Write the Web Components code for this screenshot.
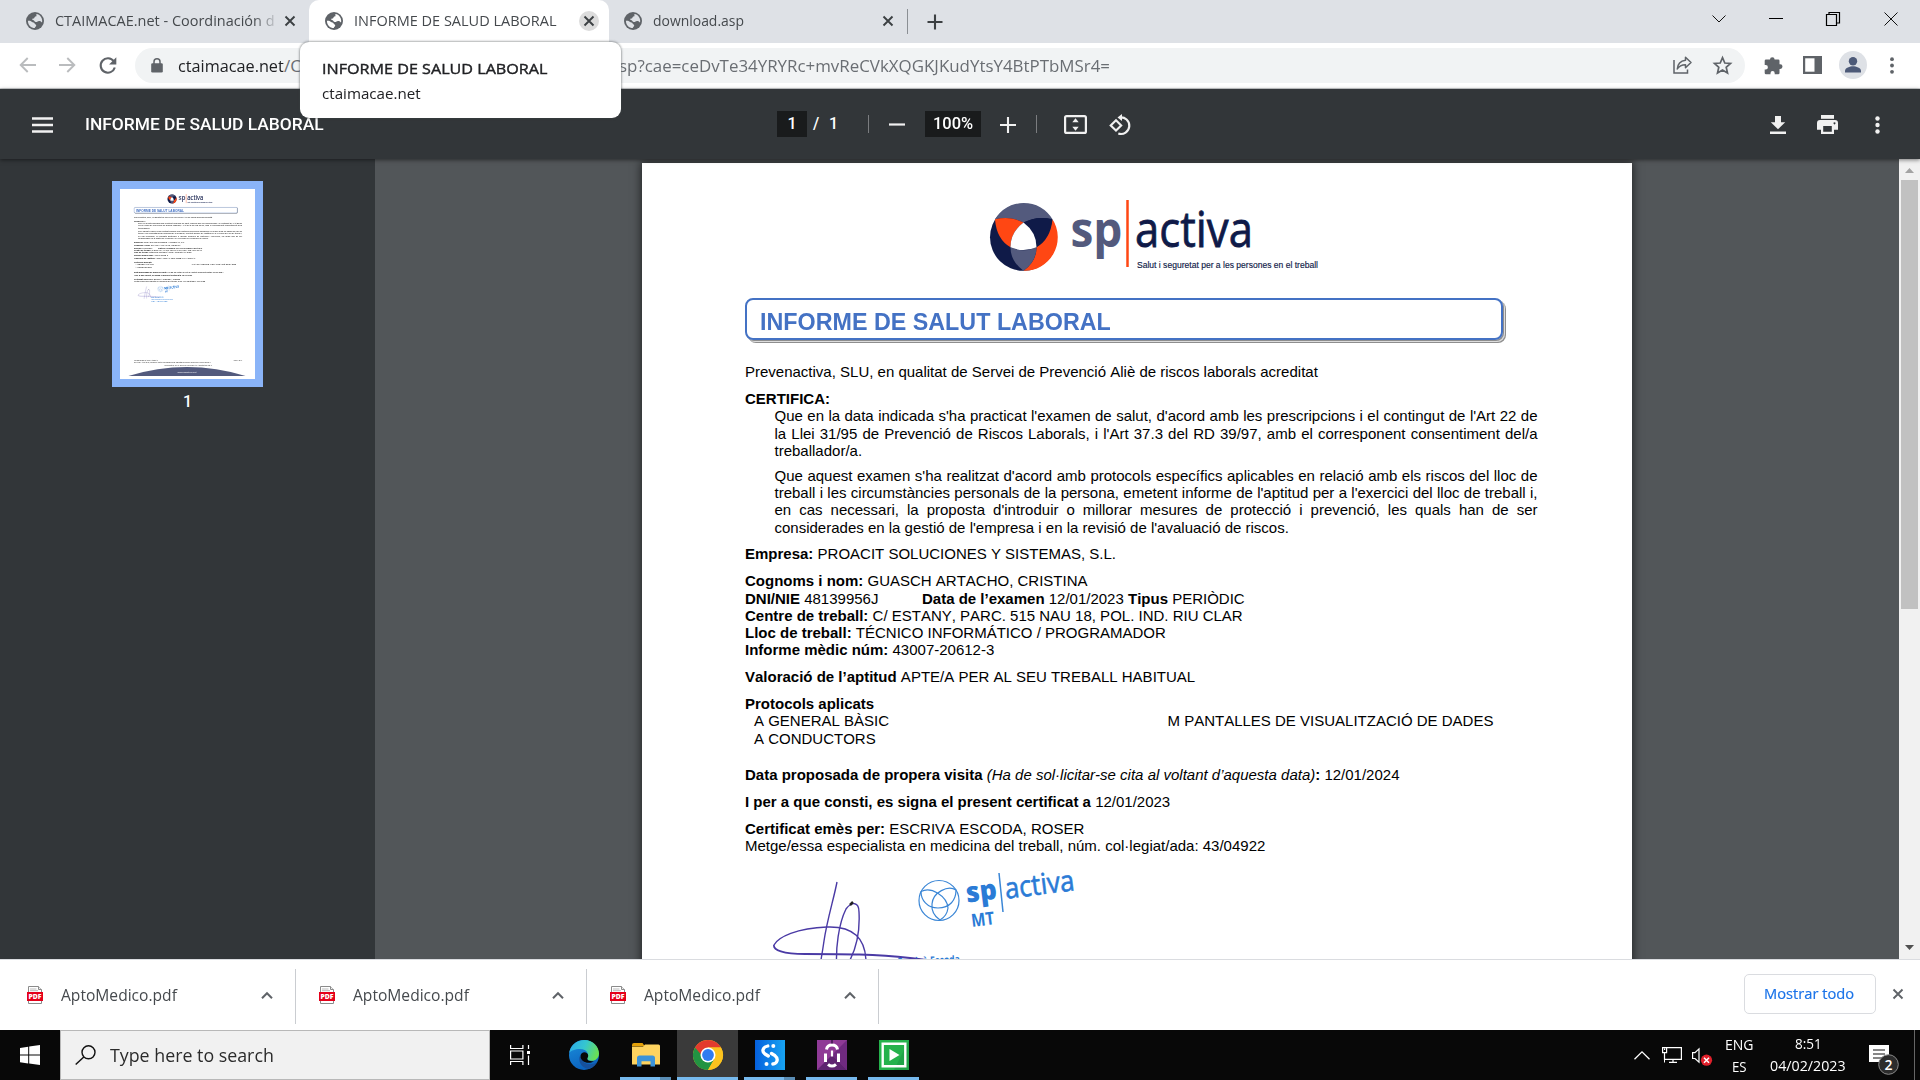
<!DOCTYPE html>
<html lang="ca">
<head>
<meta charset="utf-8">
<title>INFORME DE SALUD LABORAL</title>
<style>
html,body{margin:0;padding:0;width:1920px;height:1080px;overflow:hidden;background:#000}
</style>
</head>
<body>
<desktop-screen></desktop-screen>
<script>
const define = (name, html, setup) => {
  const tpl = document.createElement('template');
  tpl.innerHTML = html;
  customElements.define(name, class extends HTMLElement {
    constructor() { super(); this.attachShadow({mode: 'open'}); }
    connectedCallback() {
      if (this.shadowRoot.childNodes.length) return;
      if (setup) setup(this);
      this.shadowRoot.append(tpl.content.cloneNode(true));
      customElements.upgrade(this.shadowRoot);
    }
  });
};

/* Icons: [width, height, viewBox, markup] */
const GLOBE = '<circle cx="9" cy="9" r="9" fill="#5f6368"/><path fill="var(--hole,#dee1e6)" d="M10.500 2C14 2.500 16.200 5.500 16.200 9C16.200 9.600 16.100 10 16 10.500C15 9.500 14.500 8.800 13 8.900C11.500 9 11.300 10.300 9.800 10C8.500 9.700 8.300 8 6.800 7.900C6.300 7.900 6 7.500 6.300 7C6.800 6.200 8.300 6.700 8.500 5.500C8.600 4.800 9.700 5 10.300 4.300C10.900 3.600 10 2.800 10.500 2zM1.900 8.700C4 8.500 5 9 5.800 9.800C6.600 10.700 8.200 10.200 8.600 11.500C8.900 12.500 10.300 12.300 10.200 13.500C10.100 14.500 9 14.800 8.800 16.100C5 16.100 1.900 13 1.900 8.700z"/>';
const ICONS = {
  globe: [18,18,'0 0 18 18',GLOBE],
  close: [12,12,'0 0 12 12','<path d="M1.500 1.500l9 9M10.500 1.500l-9 9" stroke="currentColor" stroke-width="1.900"/>'],
  plus: [16,16,'0 0 16 16','<path d="M8 .5v15M.5 8h15" stroke="#3c4043" stroke-width="2.100"/>'],
  wdown: [14,8,'0 0 14 8','<path d="M.5.5L7 7 13.500.5" fill="none" stroke="#111" stroke-width="1"/>'],
  wmin: [14,2,'0 0 14 2','<path d="M0 .5h14" stroke="#000"/>'],
  wmax: [14,14,'0 0 14 14','<path d="M.5 2.500h10v11H.5zM3 2.500V.5h10.500v10.500h-3" fill="none" stroke="#000" stroke-width="1.200"/>'],
  wclose: [14,14,'0 0 14 14','<path d="M.5.5l13 13M13.500.5l-13 13" stroke="#111" stroke-width="1"/>'],
  back: [17,16,'0 0 17 16','<path d="M17 8H2M8.700 1L1.700 8l7 7" fill="none" stroke="#babcbe" stroke-width="1.900"/>'],
  fwd: [17,16,'0 0 17 16','<path d="M0 8h15M8.300 1l7 7-7 7" fill="none" stroke="#babcbe" stroke-width="1.900"/>'],
  reload: [18,17,'0 0 18 17','<path d="M14.700 4.200A7.200 7.200 0 1 0 15.800 10.500" fill="none" stroke="#5f6368" stroke-width="2.100"/><path d="M17.300.2v7.200h-7.200z" fill="#5f6368"/>'],
  lock: [12,15,'0 0 12 15','<path fill="#5f6368" d="M1.500 5.200h9q1.300 0 1.300 1.300v6.800q0 1.300-1.300 1.300h-9q-1.300 0-1.300-1.300V6.500q0-1.300 1.300-1.300z"/><path d="M3 6V3.700a3 3 0 0 1 6 0V6" fill="none" stroke="#5f6368" stroke-width="1.500"/>'],
  share: [19,18,'0 0 19 18','<path d="M1 4v13h13.500v-3.500" fill="none" stroke="#5f6368" stroke-width="1.500"/><path d="M12.500 1.200l5.500 5.300-5.500 5.300V8.700C8.500 8.700 6 10 4.300 13c.3-4.500 3-8 8.200-8.700z" fill="none" stroke="#5f6368" stroke-width="1.500" stroke-linejoin="round"/>'],
  star: [19,18,'0 0 19 18','<path d="M9.500 1.700l2.300 5.300 5.700.5-4.300 3.800 1.300 5.600-5-3-5 3 1.300-5.600L1.500 7.500 7.200 7z" fill="none" stroke="#5f6368" stroke-width="1.700"/>'],
  puzzle: [19,19,'0 0 19 19','<path fill="#5f6368" d="M6 3.500a2.300 2.300 0 0 1 4.600 0h3.700q1.200 0 1.200 1.200v3.600h.7a2.300 2.300 0 0 1 0 4.600h-.7v4q0 1.300-1.300 1.300h-3.500v-1a2.100 2.100 0 0 0-4.200 0v1H2q-1.300 0-1.300-1.300v-3.500h1a2.200 2.200 0 0 0 0-4.400h-1V4.800q0-1.300 1.300-1.300z"/>'],
  panel: [19,18,'0 0 19 18','<path fill="#5f6368" d="M0 0h19v18H0z"/><path fill="#fff" d="M2.200 2.300h9.300v13.400H2.200z"/>'],
  avatar: [28,28,'0 0 28 28','<circle cx="14" cy="14" r="14" fill="#dee1e6"/><circle cx="14" cy="10.200" r="4.200" fill="#4d5a78"/><path fill="#4d5a78" d="M6 21.500v-1.700c0-3 5-4.600 8-4.600s8 1.600 8 4.600v1.700z"/>'],
  kebab: [4,17,'0 0 4 17','<g fill="#5f6368"><circle cx="2" cy="2.200" r="1.900"/><circle cx="2" cy="8.500" r="1.900"/><circle cx="2" cy="14.800" r="1.900"/></g>'],
  menu: [21,16,'0 0 21 16','<path d="M0 1.500h21M0 8h21M0 14.500h21" stroke="#f1f1f1" stroke-width="2.500"/>'],
  minus: [16,3,'0 0 16 3','<path d="M0 1.500h16" stroke="#f1f1f1" stroke-width="2.200"/>'],
  pplus: [16,16,'0 0 16 16','<path d="M0 8h16M8 0v16" stroke="#f1f1f1" stroke-width="2.100"/>'],
  fit: [23,19,'0 0 23 19','<rect x="1.100" y="1.100" width="20.800" height="16.800" rx="1.500" fill="none" stroke="#f1f1f1" stroke-width="2.200"/><path d="M11.500 3.200l3.200 4H8.300zM11.500 15.800l3.200-4H8.300z" fill="#f1f1f1"/>'],
  rotate: [23,22,'0 0 23 22','<path d="M7 6.200l5.200 5.200L7 16.600l-5.300-5.200z" fill="none" stroke="#f1f1f1" stroke-width="2.100"/><path d="M10.500 3.500A8.300 8.300 0 1 1 9.300 19.500" fill="none" stroke="#f1f1f1" stroke-width="2.200"/><path d="M13 0v7L8.500 3.500z" fill="#f1f1f1"/>'],
  download: [16,18,'0 0 16 18','<path d="M5 0h6v6.200h4.200L8 13.300.8 6.200H5zM0 15.600h16v2.300H0z" fill="#f1f1f1"/>'],
  print: [21,19,'0 0 21 19','<path d="M4 0h13v3.800H4z" fill="#f1f1f1"/><path fill-rule="evenodd" d="M3 5h15q3 0 3 3v6.700h-4V19H4v-4.300H0V8q0-3 3-3zM6.200 11v5.800h8.600V11zM17.500 7.300a1 1 0 1 0 .01 0z" fill="#f1f1f1"/>'],
  pkebab: [5,18,'0 0 5 18','<g fill="#f1f1f1"><circle cx="2.500" cy="2.500" r="2.200"/><circle cx="2.500" cy="9" r="2.200"/><circle cx="2.500" cy="15.500" r="2.200"/></g>'],
  pdf: [16,18,'0 0 16 18','<path d="M1.500.5h10L14.500 3.500v14h-13z" fill="#fff" stroke="#8b8b8b"/><path d="M11.500.5v3h3" fill="#eee" stroke="#8b8b8b"/><path d="M3 3h6.500M3 4.700h8" stroke="#aaa" stroke-width=".8"/><path d="M0 6h16v9H0z" fill="#e5001a"/><text x="8" y="13" text-anchor="middle" font-family="Open Sans" font-weight="800" font-size="6.800" fill="#fff" textLength="13" lengthAdjust="spacingAndGlyphs">PDF</text>'],
  up: [12,7,'0 0 12 7','<path d="M1 6.200L6 1.200l5 5" fill="none" stroke="#5f6368" stroke-width="2"/>'],
  win: [20,20,'0 0 20 20','<path fill="#fff" d="M0 2.900L8.200 1.700v7.900H0zM9.200 1.500L20 0v9.600H9.200zM0 10.600h8.200v7.800L0 17.200zM9.200 10.600H20V20L9.200 18.500z"/>'],
  search: [21,20,'0 0 21 20','<circle cx="13.500" cy="7.300" r="6.500" fill="none" stroke="#111" stroke-width="1.400"/><path d="M8.800 12L.7 19.500" stroke="#111" stroke-width="1.500"/>'],
  taskview: [20,20,'0 0 20 20','<path d="M.6 0v3.500h12.300V0M.6 20v-3.500h12.300V20M.6 6h12.300v8H.6zM18.500 0v4M18.500 10.500V20" fill="none" stroke="#fff" stroke-width="1.200"/><path d="M17 6h3v3h-3z" fill="#fff"/>'],
  edge: [30,30,'0 0 30 30','<defs><linearGradient id="a" x1="0" y1=".2" x2="1" y2=".5"><stop stop-color="#2aa9e8"/><stop offset=".5" stop-color="#35c6d0"/><stop offset="1" stop-color="#6be052"/></linearGradient><linearGradient id="b" x1="0" y1="0" x2=".4" y2="1"><stop stop-color="#1b8fdc"/><stop offset="1" stop-color="#0b62bd"/></linearGradient></defs><circle cx="15" cy="15" r="15" fill="url(#b)"/><path d="M.2 13C1.500 5 8 0 15.500 0 24 0 30 6.500 30 13.500c0 4.500-3.500 7.300-7.200 7.300-3.300 0-5.100-1.200-4.600-2.300 2.200-3.500.5-9.500-7.200-9.500C6 9 1.500 11 .2 13z" fill="url(#a)"/><path d="M10.500 16.500c-1.500 7 4 12.500 10 12.300 3.500-1.400 6-4 7.300-6.300-7 3.700-15 1-16-5.500z" fill="#16509c"/><path d="M15 12.300c2.500 0 4.200 1.500 4.200 3.300 0 2-1 2-.9 3.300.2 2 4 2.700 7 2C19.500 25 11.500 22 11.500 16c0-1.700 1.500-3.500 3.500-3.700z" fill="#080808"/>'],
  folder: [28,24,'0 0 28 24','<path d="M0 2q0-2 2-2h8.500l2.500 3.500H0z" fill="#e3a008"/><path d="M0 3.800h11l2-2.300h13.500Q28 1.500 28 3v18.500H0z" fill="#fed35f"/><path d="M5 23.500V15q0-2.500 2.500-2.500h13Q23 12.500 23 15v8.500h-4.500v-5.200h-9v5.200z" fill="#3c93d8"/>'],
  chrome: [30,30,'0 0 30 30','<circle cx="15" cy="15" r="15" fill="#fcc31e"/><path d="M2 7.500A15 15 0 0 1 28 7.500H15L8.500 18.700z" fill="#e33b2e"/><path d="M2 7.500A15 15 0 0 0 15 30L21.500 18.700 15 15H8.500z" fill="#229342"/><path d="M28 7.500H15V15l6.500 3.700L15 30A15 15 0 0 0 28 7.500z" fill="#fcc31e"/><circle cx="15" cy="15" r="7.500" fill="#fff"/><circle cx="15" cy="15" r="5.900" fill="#2f7bf0"/>'],
  sapp: [30,30,'0 0 30 30','<defs><linearGradient id="s"><stop stop-color="#0560de"/><stop offset="1" stop-color="#18a4f2"/></linearGradient></defs><path d="M0 0h30v30H0z" fill="url(#s)"/><path d="M12.800 6C7.500 7 6.500 11.500 10 14l3.300 2M16.500 13.500l3.500 2.200c3.800 3 2.300 8-2.200 8.300" fill="none" stroke="#fff" stroke-width="3.300" stroke-linecap="round"/><g fill="#fff"><circle cx="18.300" cy="6" r="2"/><circle cx="11.500" cy="24" r="2"/></g>'],
  lapp: [30,30,'0 0 30 30','<path d="M0 0h30v30H0z" fill="#8f3a96"/><path d="M15 15L30 0v30z" fill="#702a80"/><path d="M15 15L30 30H0z" fill="#5e2370"/><path d="M9.500 9.500C10 6 12.500 5 15 5s5 1 5.500 4.500M8.500 13.500v8.500M21.500 13.500v8.500M11 24.300c2.500 2.200 5.500 2.200 8 0" fill="none" stroke="#fff" stroke-width="3"/><path d="M15 10.500v6" stroke="#fff" stroke-width="2.200"/><path d="M15 0v3.500" stroke="#3b164a" stroke-width="1.500"/>'],
  papp: [30,30,'0 0 30 30','<path d="M0 0h30v30H0z" fill="#25b24c"/><path d="M30 0v30H15z" fill="#1fa347"/><path d="M3.700 3.700h22.600v22.600H3.700z" fill="none" stroke="#fff" stroke-width="2.400"/><path d="M10.500 9l10 6-10 6z" fill="#fff"/>'],
  tup: [16,9,'0 0 16 9','<path d="M.5 8.300L8 .9l7.500 7.400" fill="none" stroke="#fff" stroke-width="1.300"/>'],
  net: [20,16,'0 0 20 16','<path d="M5 .6h14.400v11.800H2.500V6M11 12.400V15M7 15.400h8" fill="none" stroke="#fff" stroke-width="1.200"/><path d="M.6.6h4v5h-4zM2.600 1.500V3" fill="none" stroke="#fff" stroke-width="1.200"/><path d="M2.500 6v9.500" stroke="#fff" stroke-width="1"/>'],
  vol: [22,18,'0 0 22 18','<path d="M.6 4.600h2.400L7 .8v13.400L3 10.500H.6z" fill="none" stroke="#fff" stroke-width="1.200"/><circle cx="14.500" cy="12.200" r="5.600" fill="#e0202b"/><path d="M12 9.700l5 5M17 9.700l-5 5" stroke="#fff" stroke-width="1.500"/>'],
  note: [32,32,'0 0 32 32','<path d="M0 0h20v17h-6l-4 4v-4H0z" fill="#fff"/><path d="M4 5h12M4 9h12M4 13h9" stroke="#111" stroke-width="1.200"/><circle cx="19.500" cy="19.500" r="9.800" fill="#2c2c2c" stroke="#8a8a8a" stroke-width="1"/><text x="19.500" y="24.500" text-anchor="middle" font-family="Open Sans" font-weight="600" font-size="14" fill="#fff">2</text>'],
  sup: [9,5,'0 0 9 5','<path d="M4.500 0L9 5H0z" fill="#a3a3a3"/>'],
  sdown: [9,5,'0 0 9 5','<path d="M4.500 5L9 0H0z" fill="#505050"/>']
};
customElements.define('ui-icon', class extends HTMLElement {
  constructor() { super(); this.attachShadow({mode: 'open'}); }
  connectedCallback() {
    const [w, h, vb, body] = ICONS[this.getAttribute('name')];
    this.shadowRoot.innerHTML = `<style>:host{display:block;flex:none;width:${w}px;height:${h}px}svg{display:block;overflow:visible}</style><svg width="${w}" height="${h}" viewBox="${vb}">${body}</svg>`;
  }
});

/* Single line of text, condensed or widened to the width given in w */
customElements.define('fit-text', class extends HTMLElement {
  constructor() {
    super();
    this.attachShadow({mode: 'open'}).innerHTML = '<style>:host{display:block;flex:none;white-space:pre}span{display:inline-block;transform-origin:0 50%;white-space:pre}</style><span><slot></slot></span>';
  }
  connectedCallback() {
    const w = +this.getAttribute('w'), span = this.shadowRoot.querySelector('span');
    if (!w) return;
    this.style.width = w + 'px';
    span.style.transform = `scaleX(${w / span.offsetWidth})`;
  }
});

define('browser-tab', `<style>
:host{display:flex;align-items:center;flex:none;height:43px;font:15px/38px "Open Sans",sans-serif;color:#45494d;box-sizing:border-box}
:host([active]){background:#fff;border-radius:10px 10px 0 0;--hole:#fff;color:#45494d}
.t{margin-left:11px;flex:1;min-width:0;overflow:hidden;height:42px}
:host([fade]) .t{-webkit-mask-image:linear-gradient(90deg,#000 88%,transparent)}
.c{width:20px;height:20px;border-radius:50%;display:flex;align-items:center;justify-content:center;color:#3c4043}
:host([active]) .c{background:#dcdcdc}
ui-icon,.c{margin-top:-1px}.c ui-icon{margin:0}
</style><ui-icon name="globe"></ui-icon><div class="t"><slot></slot></div><div class="c"><ui-icon name="close"></ui-icon></div>`);

define('tab-strip', `<style>
:host{display:flex;height:43px;background:#dee1e6;align-items:center}
.line{width:1px;height:25px;background:#8b8f94}
.win{display:flex;align-items:center;margin-left:auto;padding:0 22px 6px 0}
</style>
<browser-tab fade style="width:300px;margin-left:26px;margin-right:-17px;padding-right:26px"><fit-text w="220">CTAIMACAE.net - Coordinación d</fit-text></browser-tab>
<browser-tab active style="width:300px;padding:0 10px 0 16px"><fit-text w="203">INFORME DE SALUD LABORAL</fit-text></browser-tab>
<browser-tab style="width:283px;margin-left:15px;padding-right:9px"><fit-text w="91">download.asp</fit-text></browser-tab>
<div class="line"></div><ui-icon name="plus" style="margin-left:19px"></ui-icon>
<div class="win"><ui-icon name="wdown"></ui-icon><ui-icon name="wmin" style="margin-left:43px"></ui-icon><ui-icon name="wmax" style="margin-left:43px"></ui-icon><ui-icon name="wclose" style="margin-left:44px"></ui-icon></div>`);

define('address-bar', `<style>
:host{display:flex;height:45px;background:#fff;border-bottom:1px solid #cfd1d3;align-items:center;font:17px/34px "Open Sans",sans-serif}
.box{display:flex;align-items:center;width:1610px;height:35px;border-radius:18px;background:#f1f3f4;margin-left:18px;box-sizing:border-box;padding-left:16px;color:#6a6e73}
ui-icon{margin-top:-1px}
</style>
<ui-icon name="back" style="margin-left:19px"></ui-icon><ui-icon name="fwd" style="margin-left:23px"></ui-icon><ui-icon name="reload" style="margin-left:23px"></ui-icon>
<div class="box"><ui-icon name="lock"></ui-icon>
<fit-text w="106" style="margin-left:15px;color:#202124">ctaimacae.net</fit-text><fit-text w="17">/C</fit-text>
<fit-text w="491" style="margin-left:318px">sp?cae=ceDvTe34YRYRc+mvReCVkXQGKJKudYtsY4BtPTbMSr4=</fit-text>
<ui-icon name="share" style="margin-left:563px"></ui-icon><ui-icon name="star" style="margin-left:21px"></ui-icon></div>
<ui-icon name="puzzle" style="margin-left:19px"></ui-icon><ui-icon name="panel" style="margin-left:20px"></ui-icon><ui-icon name="avatar" style="margin-left:17px"></ui-icon><ui-icon name="kebab" style="margin-left:23px"></ui-icon>`);

define('tab-tooltip', `<style>
:host{display:block;box-sizing:border-box;width:321px;height:76px;background:#fff;border-radius:9px;box-shadow:0 0 2px 1px rgba(60,64,67,.4);padding:14px 0 0 22px;font:15px/25px "Open Sans",sans-serif;color:#202124}
b{font-weight:500;-webkit-text-stroke:.4px #202124}
</style><fit-text w="226"><b>INFORME DE SALUD LABORAL</b></fit-text><fit-text w="99">ctaimacae.net</fit-text>`);

define('pdf-toolbar', `<style>
:host{display:flex;align-items:center;height:70px;background:#323639;color:#fff;font:500 16px/26px Roboto,sans-serif;box-shadow:0 1px 4px rgba(0,0,0,.5);position:relative}
.f{background:#191b1c;height:26px;line-height:25px;display:flex;justify-content:center;margin-top:-1px}
.l{width:1px;height:18px;background:#7b7d80}
.s{line-height:25px;margin-top:-1px}
ui-icon{margin-top:1px}
</style>
<ui-icon name="menu" style="margin-left:32px"></ui-icon><fit-text w="239" style="margin-left:32px;margin-top:1px">INFORME DE SALUD LABORAL</fit-text>
<div class="f" style="width:30px;margin-left:453px">1</div><div class="s" style="width:7px;margin-left:6px">/</div><div class="s" style="width:9px;margin-left:9px">1</div>
<div class="l" style="margin-left:30px"></div><ui-icon name="minus" style="margin-left:20px"></ui-icon>
<div class="f" style="width:56px;margin-left:20px"><fit-text w="40">100%</fit-text></div><ui-icon name="pplus" style="margin-left:19px"></ui-icon>
<div class="l" style="margin-left:20px"></div><ui-icon name="fit" style="margin-left:27px"></ui-icon><ui-icon name="rotate" style="margin-left:22px"></ui-icon>
<ui-icon name="download" style="margin-left:638px"></ui-icon><ui-icon name="print" style="margin-left:31px"></ui-icon><ui-icon name="pkebab" style="margin-left:37px"></ui-icon>`);

define('doc-logo', `<style>:host{display:block;width:330px;height:72px}svg{display:block;overflow:visible}</style>
<svg width="330" height="72" viewBox="0 0 330 72">
<g transform="translate(33.500 37.300)"><circle r="33.500" fill="#0f1a48"/>
<path d="M29-18A33.500 33.500 0 0 1 0 33.500Q13 24 13 10Q26 0 29-18z" fill="#ff4713"/>
<path d="M-28.500-18A33.500 33.500 0 0 1 29-18Q13-22 0-14.700Q-13-22-28.500-18z" fill="#535a7d"/>
<path d="M-28.500-18Q-13-22 0-14.700Q-13-5-13 10Q-27 2-28.500-18z" fill="#ff4713"/>
<path d="M29-18Q13-22 0-14.700Q13-5 13 10Q27 2 29-18z" fill="#0f1a48"/>
<path d="M-13 10Q0 16 13 10Q13 24 0 33.500Q-13 24-13 10z" fill="#535a7d"/>
<path d="M0-14.700Q13-5 13 10Q0 15.500-13 10Q-13-5 0-14.700z" fill="#fff"/></g>
<g font-family="Open Sans,sans-serif"><text x="80.500" y="46.500" font-size="50" font-weight="700" fill="#535a7d" textLength="52" lengthAdjust="spacingAndGlyphs">sp</text>
<text x="145" y="46.500" font-size="50" fill="#0f1a48" stroke="#0f1a48" stroke-width=".8" textLength="118" lengthAdjust="spacingAndGlyphs">activa</text></g>
<path d="M137.500 0v67" stroke="#ff4713" stroke-width="2.500"/>
<text x="147" y="68" font-family="Liberation Sans,sans-serif" font-size="9" fill="#0f1a48" stroke="#0f1a48" stroke-width=".15" textLength="181" lengthAdjust="spacingAndGlyphs">Salut i seguretat per a les persones en el treball</text>
</svg>`);

/* Text row of the certificate; gap is the space above it */
define('doc-line', `<style>:host{display:block;white-space:pre;height:17px;line-height:17px}:host([in]){padding-left:29.500px}:host([just]){white-space:normal;text-align:justify;text-align-last:justify}</style><slot></slot>`,
  el => { el.style.marginTop = (el.getAttribute('gap') || 0) + 'px'; });

define('doc-signature', `<style>:host{display:block;height:160px}svg{display:block;overflow:visible}</style>
<svg width="420" height="160" viewBox="0 0 420 160">
<g fill="none" stroke="#4a3aa5" stroke-width="1.400"><path d="M92 14C89 30 82 52 79 73S75 95 74 105"/><path d="M92 103C90 80 94 55 101 41C107 33 114 34 114 44C115 62 112 78 105 92"/><path d="M105 37l3-3" stroke="#222" stroke-width="2.500"/><path d="M29 77C33 69 52 60 82 59C108 58 121 70 121 95"/><path d="M29 77C28 82 38 86 60 86C100 86 130 86 165 90S180 93 190 95" stroke-width="1.800"/></g>
<g fill="none" stroke="#3a86d6" stroke-width="1.200"><circle cx="194" cy="32.500" r="20"/><path d="M176 23.500C186 18 202 28 203 40Q202 48 195 52Q186 46 187 36C188 24 203 17 211 22C211 32 205 40 193 40C182 40 176 32 176 23.500Z"/></g>
<g fill="#2a7bd6" transform="rotate(-7 222 34)" font-family="Open Sans,sans-serif"><text x="222" y="34.500" font-size="28" font-weight="800" textLength="31" lengthAdjust="spacingAndGlyphs">sp</text><text x="261" y="35.500" font-size="29" stroke="#2a7bd6" stroke-width=".6" textLength="70" lengthAdjust="spacingAndGlyphs">activa</text><text x="224" y="59.500" font-size="18" font-weight="700" textLength="23" lengthAdjust="spacingAndGlyphs">MT</text></g>
<path d="M254 5l4 39" stroke="#3a86d6" stroke-width="1.500"/>
<g fill="#2a7bd6" font-family="Open Sans,sans-serif" font-weight="700" font-size="10"><text x="126" y="94.500" transform="rotate(-2.500 216 94)" textLength="89" lengthAdjust="spacingAndGlyphs">Roser Escrivà Escoda</text><text x="126" y="112" textLength="160" lengthAdjust="spacingAndGlyphs" font-weight="400">Metge especialista en medicina del treball</text><text x="126" y="126" textLength="120" lengthAdjust="spacingAndGlyphs" font-weight="400">Col. 43/04922</text></g>
</svg>`);

define('doc-page', `<style>
:host{display:block;box-sizing:border-box;width:990px;height:1401px;background:#fff;color:#000;font:15px/17px "Liberation Sans",sans-serif;font-kerning:none;padding:37px 94.500px 0 103px;overflow:hidden}
.title{display:block;box-sizing:border-box;width:758px;height:42px;border:2.500px solid #4472c4;border-radius:8px;box-shadow:1px 1px 0 #8e8e8e,2px 2px 0 #ddd,3px 3px 0 #8e8e8e;margin:26px 0 23px;padding:2px 0 0 13px;font:bold 23.500px/41px "Liberation Sans",sans-serif;color:#4472c4}
.cols{display:flex;padding-left:9px}.cols>div:first-child{width:413.500px}
.dni{display:inline-block;width:177px}
</style>
<doc-logo style="margin-left:245px"></doc-logo>
<div class="title"><fit-text w="351">INFORME DE SALUT LABORAL</fit-text></div>
<doc-line gap="0">Prevenactiva, SLU, en qualitat de Servei de Prevenció Aliè de riscos laborals acreditat</doc-line>
<doc-line gap="10"><b>CERTIFICA:</b></doc-line>
<doc-line in just>Que en la data indicada s'ha practicat l'examen de salut, d'acord amb les prescripcions i el contingut de l'Art 22 de</doc-line>
<doc-line in just gap="1">la Llei 31/95 de Prevenció de Riscos Laborals, i l'Art 37.3 del RD 39/97, amb el corresponent consentiment del/a</doc-line>
<doc-line in>treballador/a.</doc-line>
<doc-line in just gap="8">Que aquest examen s'ha realitzat d'acord amb protocols específics aplicables en relació amb els riscos del lloc de</doc-line>
<doc-line in just>treball i les circumstàncies personals de la persona, emetent informe de l'aptitud per a l'exercici del lloc de treball i,</doc-line>
<doc-line in just>en cas necessari, la proposta d'introduir o millorar mesures de protecció i prevenció, les quals han de ser</doc-line>
<doc-line in gap="1">considerades en la gestió de l'empresa i en la revisió de l'avaluació de riscos.</doc-line>
<doc-line gap="9"><b>Empresa:</b> PROACIT SOLUCIONES Y SISTEMAS, S.L.</doc-line>
<doc-line gap="10"><b>Cognoms i nom:</b> GUASCH ARTACHO, CRISTINA</doc-line>
<doc-line gap="1"><span class="dni"><b>DNI/NIE</b> 48139956J</span><b>Data de l’examen</b> 12/01/2023 <b>Tipus</b> PERIÒDIC</doc-line>
<doc-line><b>Centre de treball:</b> C/ ESTANY, PARC. 515 NAU 18, POL. IND. RIU CLAR</doc-line>
<doc-line><b>Lloc de treball:</b> TÉCNICO INFORMÁTICO / PROGRAMADOR</doc-line>
<doc-line><b>Informe mèdic núm:</b> 43007-20612-3</doc-line>
<doc-line gap="10"><b>Valoració de l’aptitud</b> APTE/A PER AL SEU TREBALL HABITUAL</doc-line>
<doc-line gap="10"><b>Protocols aplicats</b></doc-line>
<div class="cols"><div><doc-line>A GENERAL BÀSIC</doc-line><doc-line gap="1">A CONDUCTORS</doc-line></div><doc-line>M PANTALLES DE VISUALITZACIÓ DE DADES</doc-line></div>
<doc-line gap="19"><b>Data proposada de propera visita</b> <i>(Ha de sol·licitar-se cita al voltant d’aquesta data)</i><b>:</b> 12/01/2024</doc-line>
<doc-line gap="10"><b>I per a que consti, es signa el present certificat a</b> 12/01/2023</doc-line>
<doc-line gap="10"><b>Certificat emès per:</b> ESCRIVA ESCODA, ROSER</doc-line>
<doc-line>Metge/essa especialista en medicina del treball, núm. col·legiat/ada: 43/04922</doc-line>
<doc-signature style="margin-top:14px"></doc-signature>
<slot></slot>`);

define('doc-footer', `<style>
:host{display:block;margin-top:389px;font:12px/15px "Liberation Sans",sans-serif;color:#222}
.r{display:flex;justify-content:space-between}.c{text-align:center;margin-top:10px}svg{display:block;margin:4px 0 0 -42px}
</style><div class="r"><div>INFORME DE SALUT LABORAL<br>GUASCH ARTACHO, CRISTINA Data: 12/01/2023 Tipus: PERIÒDIC Informe mèdic núm: 43007-20612-3</div><div>Pàg. 1 de 1</div></div>
<div class="c">Prevenactiva, S.L.U. Servei de Prevenció Aliè Acreditat SP-012-T</div>
<svg width="860" height="66" viewBox="0 0 860 66"><path d="M0 66Q430-66 860 66z" fill="#535a7d"/><text x="430" y="42" text-anchor="middle" font-size="18" fill="#fff">www.spactiva.cat</text></svg>`);

define('page-thumbnail', `<style>
:host{display:flex;flex-direction:column;align-items:center;width:151px;color:#fff;font:500 16px/20px Roboto,sans-serif}
.f{width:151px;height:206px;box-sizing:border-box;border:8px solid #8ab4f8;background:#fff;overflow:hidden}
doc-page{transform:scale(.1364,.1356);transform-origin:0 0}
.n{margin-top:5px}
</style><div class="f"><doc-page><doc-footer></doc-footer></doc-page></div><div class="n">1</div>`);

define('pdf-viewer', `<style>
:host{display:flex;height:800px;background:#525659;overflow:hidden}
.side{width:375px;background:#323639;box-sizing:border-box;padding:22px 0 0 112px;flex:none}
.doc{flex:1;padding:4px 0 0 267px}
.doc doc-page{box-shadow:0 0 9px 1px rgba(0,0,0,.6)}
.bar{width:21px;background:#f1f1f1;display:flex;flex-direction:column;align-items:center;box-sizing:border-box;padding:9px 0 9px;flex:none}
.thumb{width:17px;height:429px;background:#c1c1c1;margin:7px 0 auto}
</style><div class="side"><page-thumbnail></page-thumbnail></div><div class="doc"><doc-page></doc-page></div>
<div class="bar"><ui-icon name="sup"></ui-icon><div class="thumb"></div><ui-icon name="sdown"></ui-icon></div>`);

define('download-item', `<style>
:host{display:flex;align-items:center;box-sizing:border-box;width:291.500px;height:55px;border-right:1px solid #cacdd1;font:16px/53px "Open Sans",sans-serif;color:#45494d;padding:0 22px 2px 23px}
:host ui-icon:last-child{margin-left:auto}
</style><ui-icon name="pdf" style="margin-top:-1px"></ui-icon><fit-text w="116" style="margin-left:18px">AptoMedico.pdf</fit-text><ui-icon name="up"></ui-icon>`);

define('download-shelf', `<style>
:host{display:flex;align-items:center;box-sizing:border-box;height:71px;background:#fff;border-top:1px solid #dadce0;padding:2px 16px 0 4px}
.b{width:132px;height:40px;box-sizing:border-box;border:1px solid #dadce0;border-radius:5px;margin:-4px 16px 0 auto;display:flex;justify-content:center;font:500 15px/36px "Open Sans",sans-serif;color:#1a73e8}
.b fit-text{margin-left:-2px;-webkit-text-stroke:.2px #1a73e8}
.x{color:#5f6368;margin-top:-4px}
</style><download-item></download-item><download-item></download-item><download-item></download-item>
<div class="b"><fit-text w="90">Mostrar todo</fit-text></div><ui-icon class="x" name="close"></ui-icon>`);

define('task-button', `<style>
:host{display:flex;flex-direction:column;align-items:center;justify-content:space-between;box-sizing:border-box;height:50px;width:51px;flex:none}
:host([active]){background:#3a3a3a;width:61px}
.i{height:47px;display:flex;align-items:center;padding-top:3px;box-sizing:border-box}
.u{display:flex;width:100%;height:3px}
:host([run]) .u{background:#76b9ed}
:host([multi]) .u::after{content:"";margin-left:auto;width:11px;background:#5a8db5}
</style><div class="i"><slot></slot></div><div class="u"></div>`);

define('task-bar', `<style>
:host{display:flex;align-items:center;height:50px;background:#080808;font:15px/22px "Open Sans",sans-serif;color:#fff}
.start{width:60px;display:flex;justify-content:center}
.q{width:430px;height:50px;box-sizing:border-box;border:1px solid #b8b8b8;background:#f1f1f1;display:flex;align-items:center;padding-left:14px;color:#2b2b2b;font:19px/48px "Open Sans",sans-serif}
.col{display:flex;flex-direction:column;align-items:center;flex:none}
.end{width:1px;height:50px;background:#666;margin-left:13px}
</style>
<div class="start"><ui-icon name="win"></ui-icon></div>
<div class="q"><ui-icon name="search"></ui-icon><fit-text w="164" style="margin-left:14px">Type here to search</fit-text></div>
<ui-icon name="taskview" style="margin-left:20px"></ui-icon>
<task-button style="margin-left:28px"><ui-icon name="edge"></ui-icon></task-button>
<task-button run multi style="margin-left:11px"><ui-icon name="folder"></ui-icon></task-button>
<task-button run active style="margin-left:6px"><ui-icon name="chrome"></ui-icon></task-button>
<task-button run multi style="margin-left:6px"><ui-icon name="sapp"></ui-icon></task-button>
<task-button run style="margin-left:11px"><ui-icon name="lapp"></ui-icon></task-button>
<task-button run style="margin-left:11px"><ui-icon name="papp"></ui-icon></task-button>
<ui-icon name="tup" style="margin-left:715px"></ui-icon><ui-icon name="net" style="margin-left:12px"></ui-icon><ui-icon name="vol" style="margin-left:10px;margin-top:4px"></ui-icon>
<div class="col" style="margin-left:11px"><fit-text w="29">ENG</fit-text><fit-text w="15">ES</fit-text></div>
<div class="col" style="margin-left:16px;margin-top:-2px"><fit-text w="27">8:51</fit-text><fit-text w="76">04/02/2023</fit-text></div>
<ui-icon name="note" style="margin-left:23px;margin-top:12px"></ui-icon><div class="end"></div>`);

define('desktop-screen', `<style>
:host{display:flex;flex-direction:column;width:1920px;height:1080px;overflow:hidden;position:relative}
:host>*{flex:none}
pdf-toolbar{z-index:1}
tab-tooltip{position:absolute;left:300px;top:42px;z-index:2}
</style><tab-strip></tab-strip><address-bar></address-bar><pdf-toolbar></pdf-toolbar><pdf-viewer></pdf-viewer><download-shelf></download-shelf><task-bar></task-bar><tab-tooltip></tab-tooltip>`);
</script>
</body>
</html>
